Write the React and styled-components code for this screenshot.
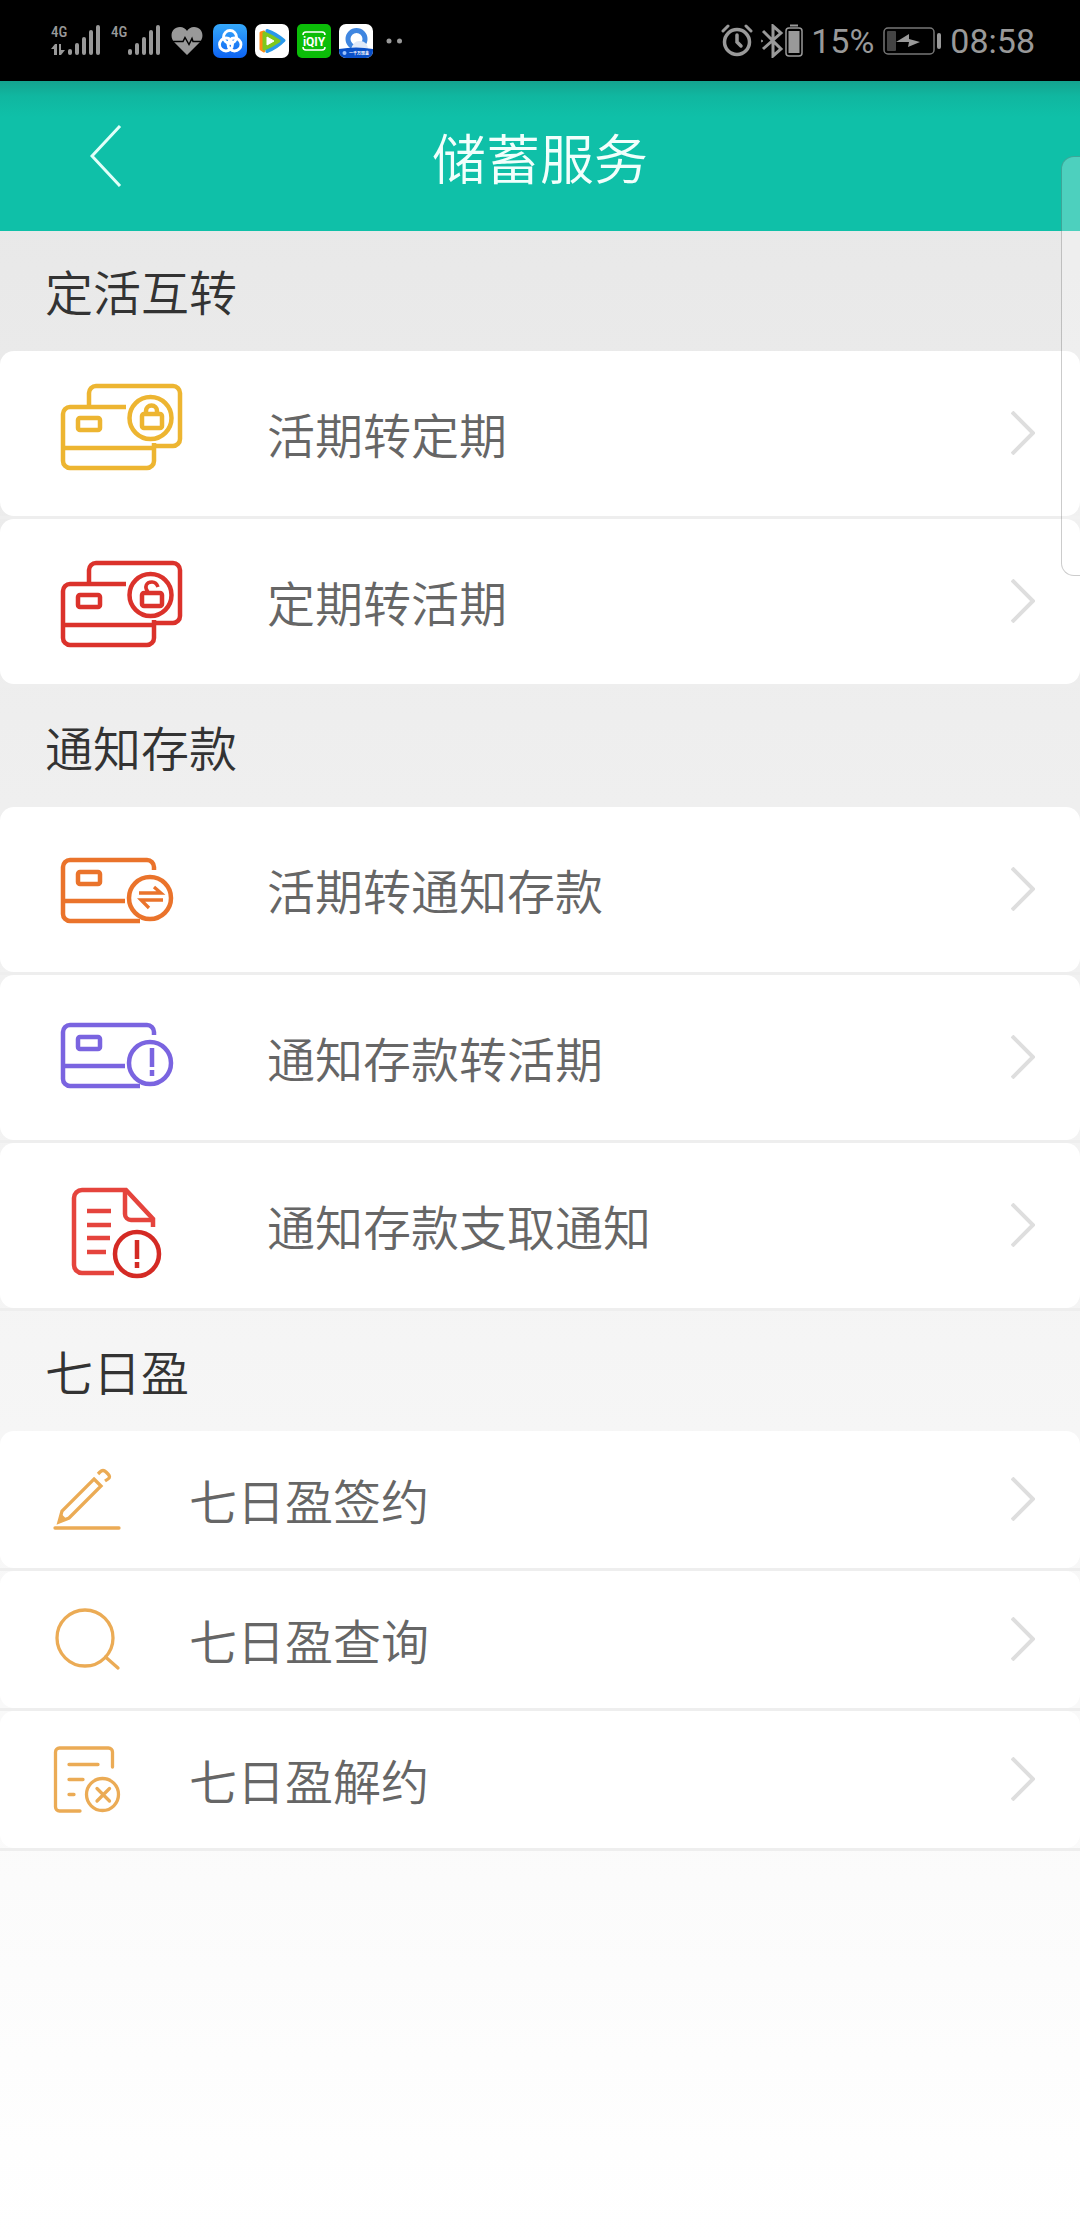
import React from 'react';
import styled, { createGlobalStyle } from 'styled-components';

const GlobalStyle = createGlobalStyle`
  * {
    box-sizing: border-box;
  }
  body {
    margin: 0;
    font-family: Roboto, 'Noto Sans CJK SC', sans-serif;
    font-weight: 350;
  }
`;

const Page = styled.div`
  position: relative;
  min-height: 100vh;
  background: linear-gradient(to bottom, #e6e6e6, #fff);
`;

const StatusBar = styled.div`
  display: flex;
  justify-content: space-between;
  align-items: center;
  height: 81px;
  padding: 0 45px 0 51px;
  background: #000;
  color: #999;
  font-size: 34px;
  font-weight: 400;
`;

const StatusGroup = styled.div`
  display: flex;
  align-items: center;
  gap: ${(props) => props.$gap || 8}px;

  svg {
    display: block;
  }
`;

const Header = styled.header`
  display: grid;
  grid-template-columns: 1fr auto 1fr;
  align-items: center;
  height: 150px;
  background: linear-gradient(to bottom, #14a48f, #10b7a0 15px, #0fc0a8 36px);
`;

const BackButton = styled.button`
  justify-self: start;
  display: flex;
  margin-left: 66px;
  padding: 12px 24px;
  border: 0;
  background: none;
  cursor: pointer;
`;

const Title = styled.h1`
  margin: 0;
  color: #f2fffc;
  font-size: 54px;
  font-weight: 350;
`;

const SectionTitle = styled.h2`
  display: flex;
  align-items: center;
  height: 120px;
  margin: 0;
  padding: 0 45px 2px;
  color: #333;
  font-size: 48px;
  font-weight: 350;
`;

const List = styled.ul`
  margin: 0;
  padding: 0;
  list-style: none;
`;

const Item = styled.li`
  border-bottom: 3px solid #eee;
`;

const ItemLink = styled.a`
  display: flex;
  align-items: center;
  gap: 60px;
  height: ${(props) => (props.$compact ? 137 : 165)}px;
  padding: 0 45px 2px;
  border-radius: 14px;
  background: #fff;
  color: #666;
  font-size: 48px;
  text-decoration: none;

  svg {
    flex: none;
  }
`;

const Label = styled.span`
  flex: 1;
`;

const EdgePanel = styled.div`
  position: absolute;
  top: 156px;
  right: 0;
  width: 19px;
  height: 420px;
  border: 1px solid rgba(0, 0, 0, 0.2);
  border-right: 0;
  border-radius: 13px 0 0 13px;
  background: rgba(255, 255, 255, 0.26);
`;

const WideIcon = ({ color, x, y, children }) => (
  <svg width="162" height="121" fill="none" stroke={color} strokeWidth="4.500" aria-hidden="true">
    <g transform={`translate(${x} ${y})`}>{children}</g>
  </svg>
);

const SmallIcon = ({ children }) => (
  <svg width="84" height="101" viewBox="0 -1 84 101" fill="none" stroke="#ebab55" strokeWidth="3.300" strokeLinecap="round" strokeLinejoin="round" aria-hidden="true">
    {children}
  </svg>
);

const DoubleCard = () => (
  <>
    <path d="M28 22V9a7 7 0 0 1 7-7h77a7 7 0 0 1 7 7v46a7 7 0 0 1-7 7H93" />
    <path d="M65 23H9a7 7 0 0 0-7 7v47a7 7 0 0 0 7 7h77a7 7 0 0 0 7-7V59M2 64h91" />
    <rect x="17" y="34" width="22" height="12" rx="2" />
    <circle cx="89.500" cy="34" r="21" />
  </>
);

const SingleCard = () => (
  <>
    <path d="M93 12V9a7 7 0 0 0-7-7H9a7 7 0 0 0-7 7v47a7 7 0 0 0 7 7h70M2 43h62" />
    <rect x="17" y="14" width="22" height="12" rx="2" />
    <circle cx="89" cy="40" r="21" />
  </>
);

const LockedCard = () => (
  <WideIcon color="#edb531" x={16} y={12}>
    <DoubleCard />
    <rect x="81" y="30" width="20" height="14" rx="2" />
    <path d="M85 30v-3a5.500 5.500 0 0 1 11 0v3" />
  </WideIcon>
);

const UnlockedCard = () => (
  <WideIcon color="#db322b" x={16} y={21}>
    <DoubleCard />
    <rect x="81" y="32" width="20" height="13" rx="2" />
    <path d="M87 31c-4-5-2-10 4-10 3 0 5 2 6 5" strokeWidth="3.500" />
  </WideIcon>
);

const TransferCard = () => (
  <WideIcon color="#ea732b" x={16} y={30}>
    <SingleCard />
    <path d="M78 35h22l-7-6M102 42H80l8 8" strokeWidth="3.300" />
  </WideIcon>
);

const AlertCard = () => (
  <WideIcon color="#7a64e0" x={16} y={27}>
    <SingleCard />
    <path d="M91 25v19M91 47v6" />
  </WideIcon>
);

const AlertDocument = () => (
  <WideIcon color="#e5443d" x={27} y={24}>
    <path d="M42 85H10a8 8 0 0 1-8-8V10a8 8 0 0 1 8-8h44l27 29v8" />
    <path d="M53 3v23a6 6 0 0 0 6 6h21" />
    <path d="M15 23h24M15 37h24M15 50h23M15 64h19" />
    <g stroke="#d42a24">
      <circle cx="65" cy="66" r="22" />
      <path d="M65 52v19M65 74v6" />
    </g>
  </WideIcon>
);

const Pencil = () => (
  <SmallIcon>
    <path d="M49 30l7 7-32 32-10 4 3-11z" strokeLinejoin="miter" />
    <path d="M13 73.500l3-9 6 6z" fill="#ebab55" stroke="none" />
    <path d="M53 25l2-2q3-3 6 0l2 2q3 3 0 5l-3 2" strokeLinecap="butt" />
    <path d="M10 79h64" />
  </SmallIcon>
);

const Search = () => (
  <SmallIcon>
    <circle cx="40" cy="49" r="28" />
    <path d="M60.500 68L73 79" />
  </SmallIcon>
);

const CancelDocument = () => (
  <SmallIcon>
    <path d="M67.500 38V23a4 4 0 0 0-4-4h-49a4 4 0 0 0-4 4v55a4 4 0 0 0 4 4H35" />
    <path d="M24 35.500h29M24 50.500h14M24 65.500h5" />
    <circle cx="57.500" cy="65.500" r="16" />
    <path d="M52 59.500l12.500 12.500M64.500 59.500L52 72" />
  </SmallIcon>
);

const Chevron = () => (
  <svg width="24" height="44" fill="none" stroke="#dedede" strokeWidth="4" aria-hidden="true">
    <path d="M1 1l21 21L1 43" />
  </svg>
);

const bars = [[18, 49], [25, 43], [32, 37], [39, 30], [46, 25]];

const Signal = ({ data }) => (
  <svg width="50" height="42" viewBox="0 20 50 42" fill="#999" aria-label="4G">
    <text x="0" y="37" fontFamily="'Roboto Condensed', Roboto, sans-serif" fontSize="15" fontWeight="500">4G</text>
    {bars.map(([x, y]) => (
      <rect key={x} x={x - 1} y={y} width="4" height={55 - y} rx="2" />
    ))}
    {data && <path d="M0 49l4-5h2v11H3v-6zM8 44h2v6h4l-4 5H8z" />}
  </svg>
);

const Heart = () => (
  <svg width="32" height="30" viewBox="0 0 32 30" aria-hidden="true">
    <path d="M16 29L3 16C-2 10 1 1 9 1c3 0 6 2 7 4 1-2 4-4 7-4 8 0 11 9 6 15z" fill="#999" />
    <path d="M0 15.500h12l2-4 4 7 3-6 1 3h10" fill="none" stroke="#000" strokeWidth="1.500" />
  </svg>
);

const CloudApp = () => (
  <svg width="34" height="34" aria-hidden="true">
    <defs>
      <linearGradient id="cloud" x2="0" y2="1">
        <stop stopColor="#35a9fb" />
        <stop offset="1" stopColor="#0d63f3" />
      </linearGradient>
    </defs>
    <rect width="34" height="34" rx="7" fill="url(#cloud)" />
    <g fill="none" stroke="#fff" strokeWidth="2.800">
      <circle cx="17" cy="13" r="6.500" />
      <circle cx="13" cy="20.500" r="6.500" />
      <circle cx="21.500" cy="20.500" r="6.500" />
    </g>
  </svg>
);

const VideoApp = () => (
  <svg width="34" height="34" strokeLinejoin="round" aria-hidden="true">
    <rect width="34" height="34" rx="7" fill="#fff" />
    <path d="M6 9v16l3 2V8z" fill="#ff8a14" stroke="#ff8a14" strokeWidth="3" />
    <path d="M12 6.500q9 3 17 10-8 8-17 11z" fill="#2998ea" stroke="#2998ea" strokeWidth="3" />
    <path d="M9 9q8 3 15 8-7 5-15 8z" fill="#7ec81e" stroke="#7ec81e" strokeWidth="3" />
    <path d="M12 13l7 4-7 4z" fill="#fff" stroke="#fff" strokeWidth="1" />
  </svg>
);

const IqiyiApp = () => (
  <svg width="34" height="34" aria-hidden="true">
    <rect width="34" height="34" rx="5" fill="#0bbd08" />
    <path d="M6 11q0-3 3-3h16q3 0 3 3M6 23q0 3 3 3h16q3 0 3-3" fill="none" stroke="#fff" strokeWidth="1.500" />
    <text x="17" y="21.500" fill="#fff" textAnchor="middle" fontFamily="Roboto, sans-serif" fontSize="12" fontWeight="700">iQIY</text>
  </svg>
);

const BrowserApp = () => (
  <svg width="34" height="34" aria-hidden="true">
    <clipPath id="tile"><rect width="34" height="34" rx="7" /></clipPath>
    <g clipPath="url(#tile)">
      <rect width="34" height="34" fill="#fff" />
      <circle cx="17.500" cy="15" r="8.500" fill="none" stroke="#3f86e0" strokeWidth="5" />
      <path d="M12 25q3-9 9-8 7 0 8 8z" fill="#dfe9f8" />
      <path d="M0 25q17-3 34 0v9H0z" fill="#0a50c8" />
      <circle cx="5.500" cy="29" r="2" fill="#9cc3ff" />
      <text x="10" y="31" fill="#fff" fontSize="4" fontWeight="700">一千万现金</text>
    </g>
  </svg>
);

const MoreDots = () => (
  <svg width="32" height="34" fill="#999" aria-hidden="true">
    <circle cx="8" cy="17" r="2.500" />
    <circle cx="18.500" cy="17" r="2.500" />
  </svg>
);

const AlarmIcon = () => (
  <svg width="32" height="34" fill="none" stroke="#999" strokeLinecap="round" aria-hidden="true">
    <circle cx="16" cy="18" r="12.500" strokeWidth="3.500" />
    <path d="M16 11v7l4 4" strokeWidth="3.500" />
    <path d="M2 7l5-5M25 2l5 5" strokeWidth="3" />
  </svg>
);

const BluetoothIcon = () => (
  <svg width="42" height="34" fill="none" stroke="#999" aria-hidden="true">
    <path d="M2 7l18 18-8 7V2l8 7L2 25" strokeWidth="3" />
    <path d="M0 16l2 1-2 1z" strokeWidth="1" />
    <rect x="25" y="4" width="16" height="28" rx="3" strokeWidth="1.500" />
    <rect x="27.500" y="7" width="11" height="22" fill="#999" stroke="none" />
    <path d="M29 1.500h8" strokeWidth="2" />
  </svg>
);

const BatteryIcon = () => (
  <svg width="60" height="34" aria-hidden="true">
    <rect x="2" y="4" width="50" height="26" rx="4" fill="none" stroke="#777" strokeWidth="1.500" />
    <rect x="5" y="7" width="9" height="20" rx="1" fill="#444" />
    <path d="M14 18l13-8v5l11 3-12 5 1-5z" fill="#999" />
    <rect x="55" y="9" width="4" height="16" rx="2" fill="#999" />
  </svg>
);

const sections = [
  {
    title: '定活互转',
    items: [
      { label: '活期转定期', Icon: LockedCard },
      { label: '定期转活期', Icon: UnlockedCard },
    ],
  },
  {
    title: '通知存款',
    items: [
      { label: '活期转通知存款', Icon: TransferCard },
      { label: '通知存款转活期', Icon: AlertCard },
      { label: '通知存款支取通知', Icon: AlertDocument },
    ],
  },
  {
    title: '七日盈',
    compact: true,
    items: [
      { label: '七日盈签约', Icon: Pencil },
      { label: '七日盈查询', Icon: Search },
      { label: '七日盈解约', Icon: CancelDocument },
    ],
  },
];

const App = () => (
  <Page lang="zh-CN">
    <GlobalStyle />
    <StatusBar>
      <StatusGroup $gap={10}>
        <Signal data />
        <Signal />
        <Heart />
        <StatusGroup>
          <CloudApp />
          <VideoApp />
          <IqiyiApp />
          <BrowserApp />
          <MoreDots />
        </StatusGroup>
      </StatusGroup>
      <StatusGroup>
        <AlarmIcon />
        <BluetoothIcon />
        <span>15%</span>
        <BatteryIcon />
        <span>08:58</span>
      </StatusGroup>
    </StatusBar>
    <Header>
      <BackButton type="button" aria-label="返回">
        <svg width="32" height="62" fill="none" stroke="#e2fff9" strokeWidth="3">
          <path d="M30 1L2 31l28 30" />
        </svg>
      </BackButton>
      <Title>储蓄服务</Title>
    </Header>
    <main>
      {sections.map(({ title, compact, items }) => (
        <section key={title}>
          <SectionTitle>{title}</SectionTitle>
          <List>
            {items.map(({ label, Icon }) => (
              <Item key={label}>
                <ItemLink href="#" $compact={compact}>
                  <Icon />
                  <Label>{label}</Label>
                  <Chevron />
                </ItemLink>
              </Item>
            ))}
          </List>
        </section>
      ))}
    </main>
    <EdgePanel />
  </Page>
);

export default App;
